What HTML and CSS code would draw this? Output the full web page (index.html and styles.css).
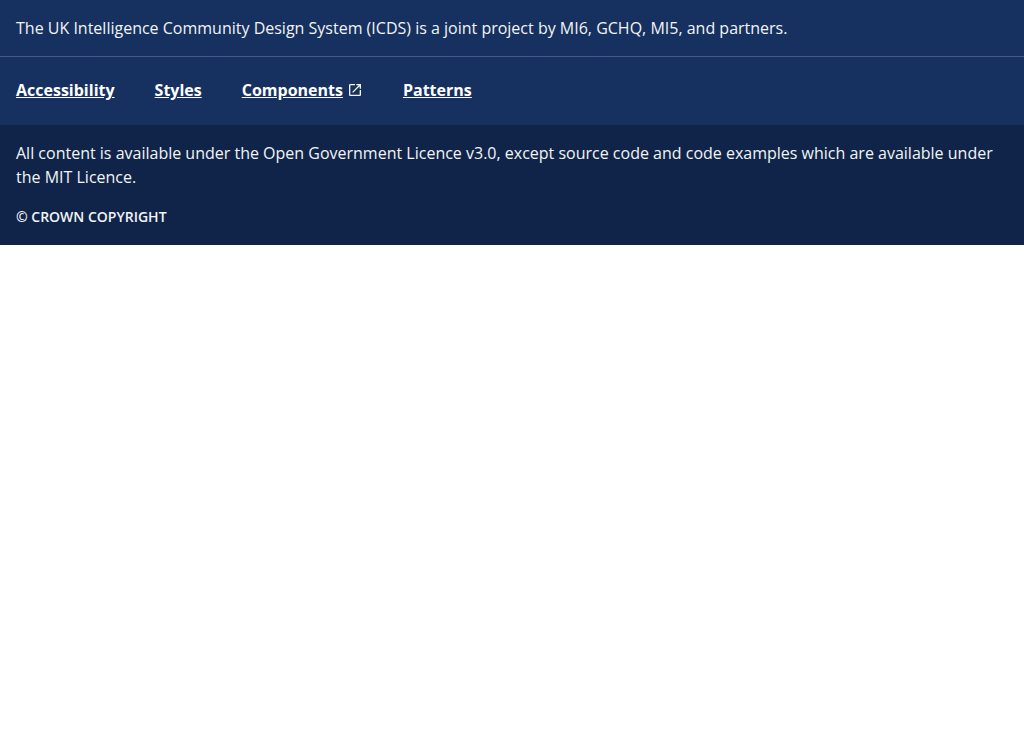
FILE: index.html
```html
<!DOCTYPE html>
<html lang="en">
<head>
<meta charset="utf-8">
<meta name="viewport" content="width=device-width, initial-scale=1">
<title>ICDS footer</title>
<link rel="stylesheet" href="styles.css">
</head>
<body>
<footer class="footer">
  <div class="footer-description">
    <p>The UK Intelligence Community Design System (ICDS) is a joint project by MI6, GCHQ, MI5, and partners.</p>
  </div>
  <nav class="footer-nav" aria-label="Footer">
    <ul class="footer-links">
      <li><a class="footer-link" href="#accessibility">Accessibility</a></li>
      <li><a class="footer-link" href="#styles">Styles</a></li>
      <li><a class="footer-link" href="#components">Components<svg class="external-icon" viewBox="0 0 24 24" aria-hidden="true"><path d="M19 19H5V5h7V3H5c-1.11 0-2 .9-2 2v14c0 1.1.89 2 2 2h14c1.1 0 2-.9 2-2v-7h-2v7zM14 3v2h3.59l-9.83 9.83 1.41 1.41L19 6.41V10h2V3h-7z"/></svg></a></li>
      <li><a class="footer-link" href="#patterns">Patterns</a></li>
    </ul>
  </nav>
  <div class="footer-compliance">
    <p>All content is available under the Open Government Licence v3.0, except source code and code examples which are available under the MIT Licence.</p>
    <p class="footer-copyright">© Crown copyright</p>
  </div>
</footer>
</body>
</html>
```
FILE: styles.css
```css
body {
  margin: 0;
  background: #fff;
}

p {
  margin: 0;
}

.footer {
  background: #16305f;
  color: #f2f4f5;
  font: 400 16px/24px "Open Sans", sans-serif;
}

.footer-description {
  padding: 16px;
  border-bottom: 1px solid #455a7f;
}

.footer-nav {
  padding: 21px 16px 23px;
}

.footer-links {
  display: flex;
  flex-wrap: wrap;
  gap: 16px 40px;
  margin: 0;
  padding: 0;
  list-style: none;
}

.footer-link {
  display: flex;
  align-items: center;
  gap: 4px;
  color: #fff;
  font-weight: 700;
}

.external-icon {
  width: 16px;
  height: 16px;
  fill: #f2f4f5;
}

.footer-compliance {
  display: flex;
  flex-direction: column;
  gap: 16px;
  padding: 16px;
  background: #10244a;
}

.footer-copyright {
  font-size: 14px;
  font-weight: 600;
  text-transform: uppercase;
}
```
